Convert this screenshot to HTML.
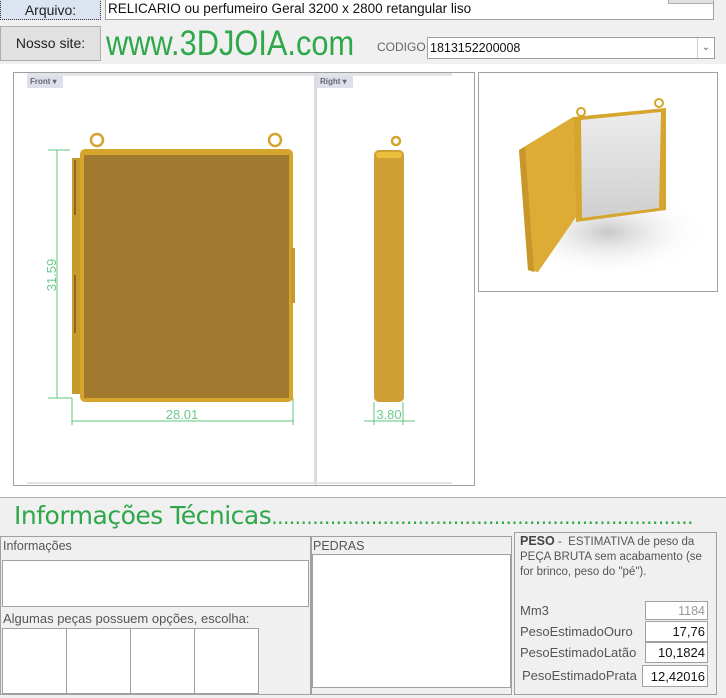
<!DOCTYPE html>
<html><head><meta charset="utf-8"><style>
*{margin:0;padding:0;box-sizing:border-box}
body{width:726px;height:698px;background:#fff;position:relative;overflow:hidden;font-family:"Liberation Sans",sans-serif}
.a{position:absolute}
.btn{background:#e1e1e1;border:1px solid #adadad;font-size:14px;color:#222;text-align:center}
.box{background:#fff;border:1px solid #a0a0a0}
.lbl{font-size:12.5px;color:#555}
</style></head><body>
<div class="a" style="left:0;top:0;width:726px;height:64px;background:#f0f0f0"></div>
<div class="a btn" style="left:0;top:-4px;width:101px;height:24px;border:1px dotted #333;background:#dbe4f0;padding-top:5px">Arquivo:</div>
<div class="a box" style="left:105px;top:-3px;width:609px;height:23px;font-size:13.5px;padding:3px 2px;color:#111">RELICARIO ou perfumeiro Geral 3200 x 2800 retangular liso</div>
<div class="a btn" style="left:668px;top:-6px;width:46px;height:10px"></div>
<div class="a btn" style="left:0;top:26px;width:101px;height:35px;padding-top:8px">Nosso site:</div>
<div class="a" style="left:106px;top:24px;font-size:35px;color:#2ea84a;transform:scaleX(0.88);transform-origin:0 0;white-space:nowrap">www.3DJOIA.com</div>
<div class="a" style="left:377px;top:40px;font-size:12px;color:#666">CODIGO</div>
<div class="a box" style="left:427px;top:37px;width:288px;height:22px;font-size:12.5px;padding:3px 2px;color:#111">1813152200008
<div class="a" style="right:0;top:0;width:17px;height:20px;border-left:1px solid #ccc;font-size:10px;color:#666;text-align:center;line-height:20px">&#8964;</div></div>

<div class="a" style="left:13px;top:72px;width:462px;height:414px;border:1px solid #a0a0a0;background:#fff"></div>
<div class="a" style="left:27px;top:73px;width:425px;height:3px;background:#e4e4e8"></div>
<div class="a" style="left:314px;top:73px;width:3px;height:412px;background:#dcdce0"></div>
<div class="a" style="left:27px;top:482px;width:425px;height:2px;background:#e4e4e8"></div>
<div class="a" style="left:27px;top:76px;width:36px;height:12px;background:#dde0e8;font-size:8px;color:#667;font-weight:bold;padding:1px 3px">Front ▾</div>
<div class="a" style="left:317px;top:76px;width:36px;height:12px;background:#dde0e8;font-size:8px;color:#667;font-weight:bold;padding:1px 3px">Right ▾</div>
<svg class="a" style="left:0;top:0" width="726" height="498">
<g fill="none" stroke="#d4a52c" stroke-width="2.5"><circle cx="97" cy="140" r="6"/><circle cx="275" cy="140" r="6"/><circle cx="396" cy="141" r="4"/></g>
<rect x="72" y="158" width="10" height="236" fill="#c79a2c"/>
<rect x="80" y="149" width="213" height="253" rx="5" fill="#d6a52e"/>
<rect x="84" y="155" width="205" height="243" fill="#a17a2f"/>
<rect x="74" y="160" width="2" height="55" fill="#8a6a20"/><rect x="74" y="275" width="2" height="58" fill="#8a6a20"/>
<rect x="291" y="248" width="4" height="55" fill="#c79a2c"/>
<rect x="374" y="150" width="30" height="252" rx="5" fill="#cfa035"/>
<rect x="376" y="152" width="26" height="6" rx="3" fill="#e8be3c"/>
<g stroke="#5fc77c" stroke-width="1" fill="#5fc77c">
<line x1="57" y1="150" x2="57" y2="398"/><line x1="48" y1="150" x2="70" y2="150"/><line x1="48" y1="398" x2="72" y2="398"/>
<line x1="72" y1="421" x2="293" y2="421"/><line x1="72" y1="398" x2="72" y2="425"/><line x1="293" y1="398" x2="293" y2="425"/>
<line x1="364" y1="421" x2="415" y2="421"/><line x1="374" y1="402" x2="374" y2="425"/><line x1="403" y1="402" x2="403" y2="425"/>
</g>
<g fill="#6cc98a" font-family="Liberation Sans" font-size="13">
<text x="182" y="419" text-anchor="middle">28.01</text>
<text x="389" y="419" text-anchor="middle">3.80</text>
<text transform="translate(56,275) rotate(-90)" text-anchor="middle">31.59</text>
</g>
</svg>

<div class="a" style="left:478px;top:72px;width:240px;height:220px;border:1px solid #a0a0a0;background:#fff"></div>
<svg class="a" style="left:478px;top:72px" width="240" height="220">
<defs><radialGradient id="sh" cx="0.5" cy="0.5" r="0.5"><stop offset="0" stop-color="#c8c8c8"/><stop offset="1" stop-color="#fff" stop-opacity="0"/></radialGradient>
<linearGradient id="gr" x1="0" y1="0" x2="0" y2="1"><stop offset="0" stop-color="#ececec"/><stop offset="1" stop-color="#cfcfcf"/></linearGradient></defs>
<ellipse cx="130" cy="160" rx="100" ry="45" fill="url(#sh)"/>
<g fill="none" stroke="#d4a52c" stroke-width="2"><circle cx="103" cy="40" r="4"/><circle cx="181" cy="31" r="4"/></g>
<polygon points="41,78 95,45 98,145 60,200 50,198" fill="#dcac35"/>
<polygon points="41,78 47,75 56,200 50,198" fill="#c8962a"/>
<polygon points="95,45 188,36 188,138 98,150" fill="#d6a52e"/>
<polygon points="103,48 183,40 181,136 104,146" fill="url(#gr)"/>
</svg>

<div class="a" style="left:0;top:497px;width:726px;height:201px;background:#f0f0f0;border-top:1px solid #b0b0b0"></div>
<div class="a" style="left:14px;top:501px;font-size:25px;color:#2ea84a;white-space:nowrap;font-family:'DejaVu Sans',sans-serif;letter-spacing:-0.5px">Informações Técnicas<span style="font-size:20px">........................................................................</span></div>
<div class="a" style="left:0;top:536px;width:311px;height:159px;border:1px solid #a0a0a0"></div>
<div class="a lbl" style="left:3px;top:539px">Informações</div>
<div class="a box" style="left:2px;top:560px;width:307px;height:47px"></div>
<div class="a lbl" style="left:3px;top:611px;font-size:13px">Algumas peças possuem opções, escolha:</div>
<div class="a" style="left:2px;top:628px;width:257px;height:66px;background:#fff;border:1px solid #a0a0a0"></div>
<div class="a" style="left:66px;top:628px;width:1px;height:66px;background:#a0a0a0"></div>
<div class="a" style="left:130px;top:628px;width:1px;height:66px;background:#a0a0a0"></div>
<div class="a" style="left:194px;top:628px;width:1px;height:66px;background:#a0a0a0"></div>
<div class="a" style="left:311px;top:536px;width:201px;height:159px;border:1px solid #a0a0a0"></div>
<div class="a lbl" style="left:313px;top:539px">PEDRAS</div>
<div class="a box" style="left:312px;top:554px;width:199px;height:134px"></div>
<div class="a" style="left:514px;top:532px;width:203px;height:163px;border:1px solid #a0a0a0"></div>
<div class="a lbl" style="left:520px;top:534px;font-size:11.5px;line-height:15px;width:195px"><b style="color:#444;font-size:12.5px">PESO</b> - &nbsp;ESTIMATIVA de peso da PEÇA BRUTA sem acabamento (se for brinco, peso do "pé").</div>
<div class="a lbl" style="left:520px;top:603px;font-size:13px">Mm3</div>
<div class="a box" style="left:645px;top:601px;width:63px;height:19px;text-align:right;font-size:12.5px;color:#999;padding:2px 2px">1184</div>
<div class="a lbl" style="left:520px;top:624px;font-size:13px">PesoEstimadoOuro</div>
<div class="a box" style="left:645px;top:621px;width:63px;height:21px;text-align:right;font-size:13px;color:#111;padding:2px 2px">17,76</div>
<div class="a lbl" style="left:520px;top:645px;font-size:13px">PesoEstimadoLatão</div>
<div class="a box" style="left:645px;top:642px;width:63px;height:21px;text-align:right;font-size:13px;color:#111;padding:2px 2px">10,1824</div>
<div class="a lbl" style="left:522px;top:668px;font-size:13px">PesoEstimadoPrata</div>
<div class="a box" style="left:642px;top:665px;width:66px;height:22px;text-align:right;font-size:13px;color:#111;padding:3px 2px">12,42016</div>
</body></html>
